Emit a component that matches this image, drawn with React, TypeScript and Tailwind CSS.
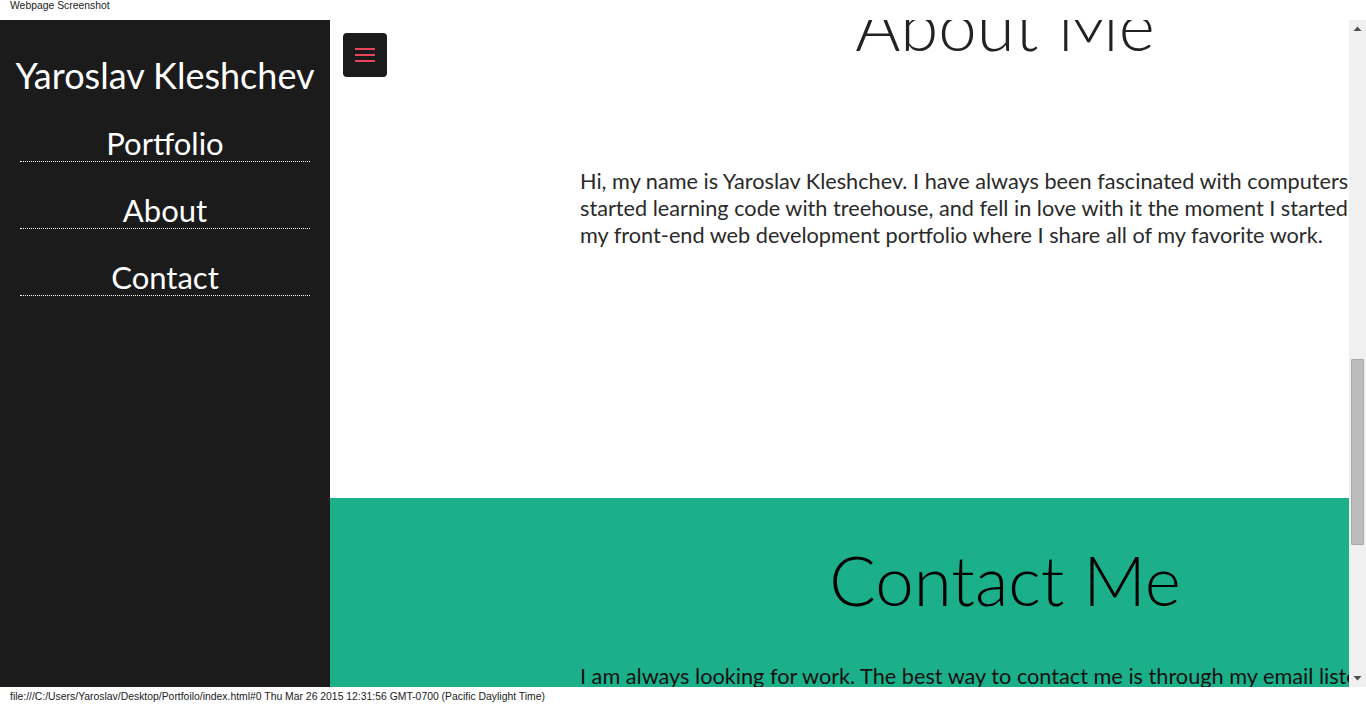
import React from 'react'

const NAV = ['Portfolio', 'About', 'Contact']

const Hamburger: React.FC = () => (
  <button
    type="button"
    aria-label="Menu"
    className="absolute left-[13px] top-[13px] flex h-[44px] w-[44px] flex-col items-center justify-center gap-[4px] rounded-[4px] bg-[#1b1b1b]"
  >
    <span className="block h-[2px] w-[20px] bg-[#e8445a]" />
    <span className="block h-[2px] w-[20px] bg-[#e8445a]" />
    <span className="block h-[2px] w-[20px] bg-[#e8445a]" />
  </button>
)

const Scrollbar: React.FC = () => (
  <div className="flex w-[17px] shrink-0 flex-col items-center bg-[#f0f0f0]">
    <svg width="9" height="17" viewBox="0 0 9 17">
      <path d="M0.5 11 L4.5 6.5 L8.5 11 Z" fill="#505050" />
    </svg>
    <div className="mt-[322px] h-[186px] w-[13px] rounded-[1px] border border-[#a8a8a8] bg-[#bcbcbc]" />
    <div className="flex-1" />
    <svg width="9" height="17" viewBox="0 0 9 17">
      <path d="M0.5 6 L4.5 10.5 L8.5 6 Z" fill="#505050" />
    </svg>
  </div>
)

export default function App() {
  return (
    <div className="flex h-[707px] w-[1366px] flex-col overflow-hidden bg-white">
      {/* capture header */}
      <div className="flex h-[20px] shrink-0 items-start pl-[10px] text-[10.4px] leading-[12px] text-[#222]" style={{ fontFamily: '"Liberation Sans", Arial, sans-serif' }}>
        Webpage Screenshot
      </div>

      <div className="flex h-[667px] shrink-0">
        {/* sidebar */}
        <aside className="flex w-[330px] shrink-0 flex-col items-center bg-[#1b1b1b] pt-[31px]" style={{ fontFamily: 'Lato, "Open Sans", sans-serif' }}>
          <h1 className="whitespace-nowrap text-[36px] leading-[48px] font-normal text-white">Yaroslav Kleshchev</h1>
          <nav className="mt-[26px] flex w-[290px] flex-col gap-[30px]">
            {NAV.map((item) => (
              <a key={item} href="#" className="block border-b border-dotted border-white text-center text-[31px] leading-[36px] text-white">
                {item}
              </a>
            ))}
          </nav>
        </aside>

        {/* main content */}
        <main className="relative flex-1 overflow-hidden" style={{ fontFamily: 'Lato, "Open Sans", sans-serif' }}>
          <section className="flow-root h-[478px] bg-white">
            <div className="ml-[250px] w-[850px]">
              <h2 className="-mt-[30px] text-center text-[69px] leading-none font-light text-[#222]">About Me</h2>
              <p className="mt-[109px] whitespace-nowrap text-[21.7px] leading-[27px] text-[#2a2a2a]">
                Hi, my name is Yaroslav Kleshchev. I have always been fascinated with computers. I
                <br />
                started learning code with treehouse, and fell in love with it the moment I started. This is
                <br />
                my front-end web development portfolio where I share all of my favorite work.
              </p>
            </div>
          </section>
          <section className="flow-root h-[300px] bg-[#1bb08a]">
            <div className="ml-[250px] w-[850px] pt-[47px]">
              <h2 className="text-center text-[69px] leading-none font-light text-black">Contact Me</h2>
              <p className="mt-[49px] whitespace-nowrap text-[21.7px] leading-[27px] text-[#111]">
                I am always looking for work. The best way to contact me is through my email listed below.
              </p>
            </div>
          </section>
          <Hamburger />
        </main>

        <Scrollbar />
      </div>

      {/* capture footer */}
      <div className="flex h-[20px] shrink-0 items-center pl-[10px] text-[10.4px] text-[#222]" style={{ fontFamily: '"Liberation Sans", Arial, sans-serif' }}>
        file:///C:/Users/Yaroslav/Desktop/Portfoilo/index.html#0 Thu Mar 26 2015 12:31:56 GMT-0700 (Pacific Daylight Time)
      </div>
    </div>
  )
}
